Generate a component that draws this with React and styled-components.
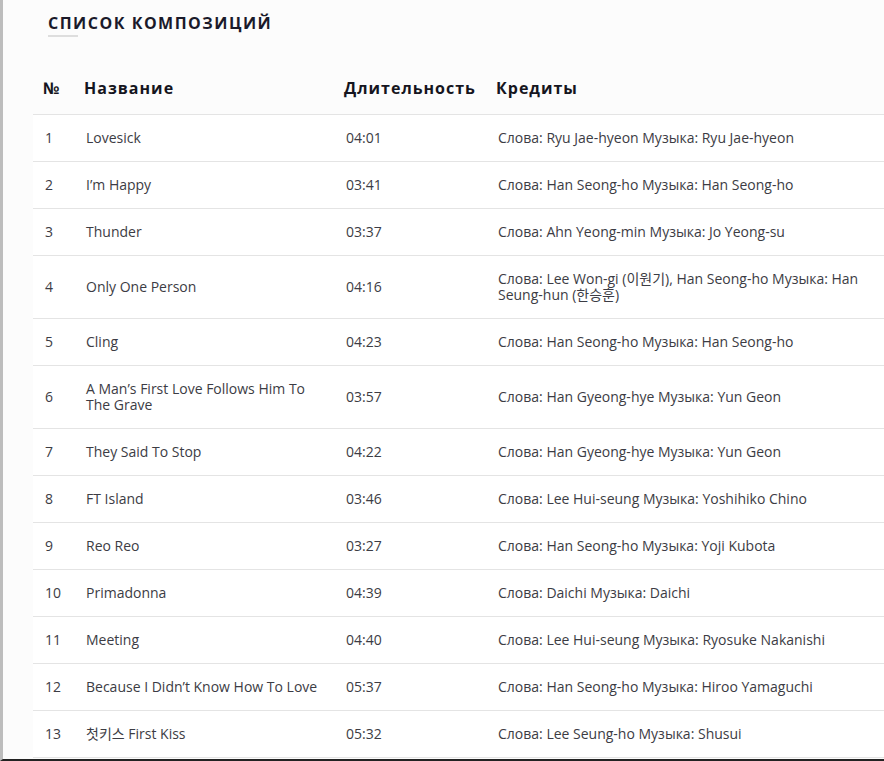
import React from "react";
import styled, { createGlobalStyle } from "styled-components";

const GlobalStyle = createGlobalStyle`
  html, body {
    margin: 0;
    padding: 0;
    background: #fff;
  }
  body {
    font-family: "Open Sans", "Noto Sans CJK KR", sans-serif;
  }
`;

const Page = styled.div`
  box-sizing: border-box;
  height: 761px;
  border-left: 3px solid #bdbdbd;
  border-bottom: 2px solid #222;
  background: #fcfcfc;
  overflow: hidden;
`;

const Heading = styled.div`
  box-sizing: border-box;
  padding: 12px 0 0 45px;
  height: 64px;
`;

const Title = styled.h2`
  margin: 0;
  font-size: 16px;
  line-height: 22px;
  font-weight: 700;
  letter-spacing: 1.5px;
  color: #1a1a2a;
  text-transform: uppercase;
`;

const Underline = styled.div`
  width: 30px;
  height: 2px;
  margin-top: 1px;
  background: #dedede;
`;

const Table = styled.table`
  margin-left: 30px;
  width: calc(100% - 30px);
  border-collapse: collapse;
  table-layout: fixed;
  font-family: "Open Sans", "Noto Sans CJK KR", sans-serif;
`;

const Head = styled.th`
  text-align: left;
  padding: 0 0 2px 10px;
  height: 48px;
  font-size: 16px;
  font-weight: 700;
  letter-spacing: 1px;
  color: #151520;
  border-bottom: 1px solid #e4e4e4;
  vertical-align: middle;
`;

const Row = styled.tr`
  background: #fff;
  border-bottom: 1px solid #e4e4e4;
`;

const Cell = styled.td`
  padding: 15px 12px;
  font-size: 14px;
  line-height: 16px;
  color: #3c3c44;
  vertical-align: middle;
`;

const tracks = [
  ["Lovesick", "04:01", "Слова: Ryu Jae-hyeon Музыка: Ryu Jae-hyeon"],
  ["I’m Happy", "03:41", "Слова: Han Seong-ho Музыка: Han Seong-ho"],
  ["Thunder", "03:37", "Слова: Ahn Yeong-min Музыка: Jo Yeong-su"],
  ["Only One Person", "04:16", "Слова: Lee Won-gi (이원기), Han Seong-ho Музыка: Han Seung-hun (한승훈)"],
  ["Cling", "04:23", "Слова: Han Seong-ho Музыка: Han Seong-ho"],
  ["A Man’s First Love Follows Him To The Grave", "03:57", "Слова: Han Gyeong-hye Музыка: Yun Geon"],
  ["They Said To Stop", "04:22", "Слова: Han Gyeong-hye Музыка: Yun Geon"],
  ["FT Island", "03:46", "Слова: Lee Hui-seung Музыка: Yoshihiko Chino"],
  ["Reo Reo", "03:27", "Слова: Han Seong-ho Музыка: Yoji Kubota"],
  ["Primadonna", "04:39", "Слова: Daichi Музыка: Daichi"],
  ["Meeting", "04:40", "Слова: Lee Hui-seung Музыка: Ryosuke Nakanishi"],
  ["Because I Didn’t Know How To Love", "05:37", "Слова: Han Seong-ho Музыка: Hiroo Yamaguchi"],
  ["첫키스 First Kiss", "05:32", "Слова: Lee Seung-ho Музыка: Shusui"],
];

export default function App() {
  return (
    <>
      <GlobalStyle />
      <Page>
        <Heading>
          <Title>Список композиций</Title>
          <Underline />
        </Heading>
        <Table>
          <colgroup>
            <col style={{ width: 41 }} />
            <col style={{ width: 260 }} />
            <col style={{ width: 152 }} />
            <col />
          </colgroup>
          <thead>
            <tr>
              <Head>№</Head>
              <Head>Название</Head>
              <Head>Длительность</Head>
              <Head>Кредиты</Head>
            </tr>
          </thead>
          <tbody>
            {tracks.map(([name, time, credits], i) => (
              <Row key={i}>
                <Cell>{i + 1}</Cell>
                <Cell>{name}</Cell>
                <Cell>{time}</Cell>
                <Cell>{credits}</Cell>
              </Row>
            ))}
          </tbody>
        </Table>
      </Page>
    </>
  );
}
